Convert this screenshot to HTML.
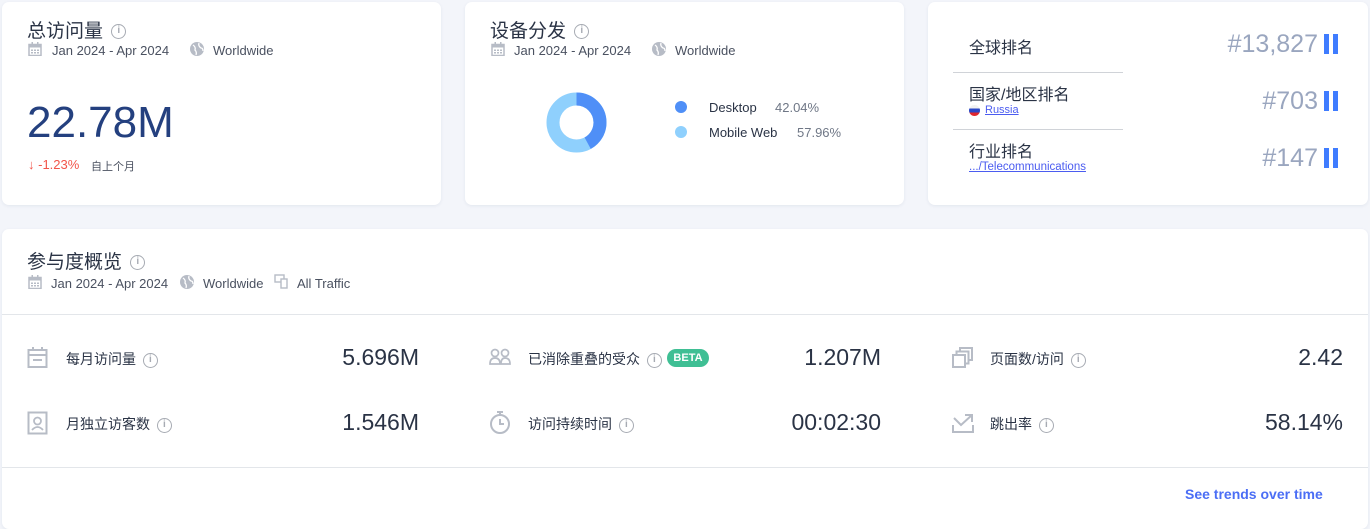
<!DOCTYPE html>
<html><head><meta charset="utf-8"><style>
*{margin:0;padding:0;box-sizing:border-box}
body{width:1370px;height:519px;background:#f3f5fa;font-family:"Liberation Sans","Noto Sans CJK SC",sans-serif;position:relative;overflow:hidden;color:#2a3345}
.card{position:absolute;background:#fff;border-radius:7px;box-shadow:0 1px 3px rgba(40,60,100,.08)}
.a{position:absolute;white-space:nowrap}
.t{font-size:19px;color:#2a3345}
.m{font-size:13px;color:#4a5160}
.ic{display:inline-block;width:15px;height:15px;border:1.5px solid #a7abb3;border-radius:50%;font-size:10px;color:#a7abb3;text-align:center;line-height:12px;font-weight:bold;vertical-align:middle;margin-left:3px}
.lbl{font-size:14px;color:#2a3345}
.val{font-size:23px;color:#2a3345;text-align:right}
.rk{font-size:25px;color:#9aa6bf;text-align:right}
.bar{position:absolute;width:5px;height:20px;background:#3f7cff}
</style></head><body>
<svg width="0" height="0" style="position:absolute"><defs>
<g id="cal"><rect x="1" y="2.5" width="12" height="11" fill="none" stroke="#b7bcc6" stroke-width="1.5"/><rect x="1" y="2.5" width="12" height="3" fill="#b7bcc6"/><rect x="3.5" y="0" width="1.5" height="3" fill="#b7bcc6"/><rect x="9" y="0" width="1.5" height="3" fill="#b7bcc6"/><g fill="#b7bcc6"><rect x="3" y="7.5" width="2" height="1.5"/><rect x="6" y="7.5" width="2" height="1.5"/><rect x="9" y="7.5" width="2" height="1.5"/><rect x="3" y="10" width="2" height="1.5"/><rect x="6" y="10" width="2" height="1.5"/><rect x="9" y="10" width="2" height="1.5"/></g></g>
<g id="glb"><circle cx="7" cy="7" r="7" fill="#b7bcc6"/><path d="M3 3 Q6 5 5 8 Q7 10 6 13 M9 1 Q8 4 11 6 Q13 6 13 9" stroke="#fff" stroke-width="1.3" fill="none"/></g>
</defs></svg>

<!-- card 1 -->
<div class="card" style="left:2px;top:2px;width:439px;height:203px"></div>
<div class="a t" style="left:27px;top:16px">总访问量 <span class="ic">i</span></div>
<svg class="a" style="left:28px;top:42px" width="14" height="14"><use href="#cal"/></svg>
<div class="a m" style="left:52px;top:43px">Jan 2024 - Apr 2024</div>
<svg class="a" style="left:190px;top:42px" width="14" height="14"><use href="#glb"/></svg>
<div class="a m" style="left:213px;top:43px">Worldwide</div>
<div class="a" style="left:27px;top:98px;font-size:44px;color:#24407f">22.78M</div>
<div class="a" style="left:28px;top:157px;font-size:13px;color:#f2554a">↓ -1.23%</div>
<div class="a" style="left:91px;top:158px;font-size:11px;color:#4a5160">自上个月</div>

<!-- card 2 -->
<div class="card" style="left:465px;top:2px;width:439px;height:203px"></div>
<div class="a t" style="left:490px;top:16px">设备分发 <span class="ic">i</span></div>
<svg class="a" style="left:491px;top:42px" width="14" height="14"><use href="#cal"/></svg>
<div class="a m" style="left:514px;top:43px">Jan 2024 - Apr 2024</div>
<svg class="a" style="left:652px;top:42px" width="14" height="14"><use href="#glb"/></svg>
<div class="a m" style="left:675px;top:43px">Worldwide</div>
<svg class="a" style="left:546px;top:92px" width="61" height="61" viewBox="0 0 61 61">
<circle cx="30.5" cy="30.5" r="23.5" fill="none" stroke="#8fd0fd" stroke-width="13"/>
<circle cx="30.5" cy="30.5" r="23.5" fill="none" stroke="#4f8ff7" stroke-width="13" stroke-dasharray="62.07 200" transform="rotate(-90 30.5 30.5)"/>
</svg>
<div class="a" style="left:675px;top:101px;width:12px;height:12px;border-radius:50%;background:#4f8ff7"></div>
<div class="a" style="left:675px;top:126px;width:12px;height:12px;border-radius:50%;background:#8fd0fd"></div>
<div class="a" style="left:709px;top:100px;font-size:13px;color:#2a3345">Desktop</div>
<div class="a" style="left:775px;top:100px;font-size:13px;color:#6f7786">42.04%</div>
<div class="a" style="left:709px;top:125px;font-size:13px;color:#2a3345">Mobile Web</div>
<div class="a" style="left:797px;top:125px;font-size:13px;color:#6f7786">57.96%</div>

<!-- card 3 -->
<div class="card" style="left:928px;top:2px;width:440px;height:203px"></div>
<div class="a" style="left:969px;top:34px;font-size:16px">全球排名</div>
<div class="a" style="left:953px;top:72px;width:170px;height:1px;background:#d0d3d8"></div>
<div class="a" style="left:969px;top:81px;font-size:16px">国家/地区排名</div>
<div class="a" style="left:969px;top:105px;width:11px;height:11px;border-radius:50%;background:linear-gradient(#f1f1f1 33%,#2a47c8 33%,#2a47c8 66%,#e0262f 66%)"></div>
<div class="a" style="left:985px;top:104px;font-size:11px;color:#4b5cf0;text-decoration:underline">Russia</div>
<div class="a" style="left:953px;top:129px;width:170px;height:1px;background:#d0d3d8"></div>
<div class="a" style="left:969px;top:138px;font-size:16px">行业排名</div>
<div class="a" style="left:969px;top:161px;font-size:11.5px;color:#4b5cf0;text-decoration:underline">.../Telecommunications</div>
<div class="a rk" style="right:52px;top:30px">#13,827</div>
<div class="a rk" style="right:52px;top:87px">#703</div>
<div class="a rk" style="right:52px;top:144px">#147</div>
<div class="bar" style="left:1324px;top:34px"></div><div class="bar" style="left:1333px;top:34px"></div>
<div class="bar" style="left:1324px;top:91px"></div><div class="bar" style="left:1333px;top:91px"></div>
<div class="bar" style="left:1324px;top:148px"></div><div class="bar" style="left:1333px;top:148px"></div>

<!-- bottom card -->
<div class="card" style="left:2px;top:229px;width:1366px;height:300px"></div>
<div class="a t" style="left:27px;top:247px">参与度概览 <span class="ic">i</span></div>
<svg class="a" style="left:28px;top:275px" width="14" height="14"><use href="#cal"/></svg>
<div class="a m" style="left:51px;top:276px">Jan 2024 - Apr 2024</div>
<svg class="a" style="left:180px;top:275px" width="14" height="14"><use href="#glb"/></svg>
<div class="a m" style="left:203px;top:276px">Worldwide</div>
<svg class="a" style="left:274px;top:274px" width="15" height="15"><rect x="1" y="1" width="9" height="7" fill="none" stroke="#b7bcc6" stroke-width="1.4"/><rect x="7" y="5" width="6" height="9" fill="#fff" stroke="#b7bcc6" stroke-width="1.4"/></svg>
<div class="a m" style="left:297px;top:276px">All Traffic</div>
<div class="a" style="left:2px;top:314px;width:1366px;height:1px;background:#e3e6ea"></div>
<div class="a" style="left:2px;top:467px;width:1366px;height:1px;background:#e3e6ea"></div>

<!-- metrics -->
<svg class="a" style="left:27px;top:347px" width="22" height="22"><rect x="1.5" y="3" width="18" height="17" fill="none" stroke="#b7bcc6" stroke-width="2"/><line x1="1" y1="8" x2="20" y2="8" stroke="#b7bcc6" stroke-width="2"/><line x1="6" y1="0" x2="6" y2="4" stroke="#b7bcc6" stroke-width="2"/><line x1="15" y1="0" x2="15" y2="4" stroke="#b7bcc6" stroke-width="2"/><line x1="6" y1="13" x2="15" y2="13" stroke="#b7bcc6" stroke-width="2"/></svg>
<div class="a lbl" style="left:66px;top:349px">每月访问量 <span class="ic">i</span></div>
<div class="a val" style="right:951px;top:344px">5.696M</div>

<svg class="a" style="left:27px;top:411px" width="22" height="24"><rect x="1.5" y="1.5" width="18" height="21" fill="none" stroke="#b7bcc6" stroke-width="2"/><circle cx="10.5" cy="10" r="3.5" fill="none" stroke="#b7bcc6" stroke-width="1.8"/><path d="M5 19 Q10.5 13 16 19" fill="none" stroke="#b7bcc6" stroke-width="1.8"/></svg>
<div class="a lbl" style="left:66px;top:414px">月独立访客数 <span class="ic">i</span></div>
<div class="a val" style="right:951px;top:409px">1.546M</div>

<svg class="a" style="left:489px;top:348px" width="23" height="18"><circle cx="6" cy="5" r="3.5" fill="none" stroke="#b7bcc6" stroke-width="1.7"/><circle cx="16" cy="5" r="3.5" fill="none" stroke="#b7bcc6" stroke-width="1.7"/><path d="M1 16 Q1 10 6 10 Q11 10 11 16Z M12 16 Q12 10 16 10 Q21 10 21 16Z" fill="none" stroke="#b7bcc6" stroke-width="1.7"/></svg>
<div class="a lbl" style="left:528px;top:349px">已消除重叠的受众 <span class="ic">i</span></div>
<div class="a" style="left:667px;top:349px;width:42px;height:18px;border-radius:9px;background:#3fbf94;color:#fff;font-size:11px;font-weight:bold;text-align:center;line-height:18px">BETA</div>
<div class="a val" style="right:489px;top:344px">1.207M</div>

<svg class="a" style="left:489px;top:410px" width="23" height="25"><circle cx="11" cy="14" r="9" fill="none" stroke="#b7bcc6" stroke-width="2"/><line x1="8" y1="2" x2="14" y2="2" stroke="#b7bcc6" stroke-width="2"/><line x1="11" y1="2" x2="11" y2="5" stroke="#b7bcc6" stroke-width="2"/><path d="M11 9 V14 H15" fill="none" stroke="#b7bcc6" stroke-width="2"/></svg>
<div class="a lbl" style="left:528px;top:414px">访问持续时间 <span class="ic">i</span></div>
<div class="a val" style="right:489px;top:409px">00:02:30</div>

<svg class="a" style="left:952px;top:347px" width="22" height="22"><rect x="8" y="1" width="12" height="12" fill="none" stroke="#b7bcc6" stroke-width="2"/><rect x="4.5" y="4.5" width="12" height="12" fill="#fff" stroke="#b7bcc6" stroke-width="2"/><rect x="1" y="8" width="12" height="12" fill="#fff" stroke="#b7bcc6" stroke-width="2"/></svg>
<div class="a lbl" style="left:990px;top:349px">页面数/访问 <span class="ic">i</span></div>
<div class="a val" style="right:27px;top:344px">2.42</div>

<svg class="a" style="left:952px;top:413px" width="22" height="20"><path d="M1 12 V19 H21 V12" fill="none" stroke="#b7bcc6" stroke-width="2"/><path d="M2 5 L9 12 L20 2 M13 2 H20 V9" fill="none" stroke="#b7bcc6" stroke-width="2"/></svg>
<div class="a lbl" style="left:990px;top:414px">跳出率 <span class="ic">i</span></div>
<div class="a val" style="right:27px;top:409px">58.14%</div>

<div class="a" style="left:1185px;top:486px;font-size:14px;font-weight:bold;color:#4b6ef5">See trends over time</div>
</body></html>
